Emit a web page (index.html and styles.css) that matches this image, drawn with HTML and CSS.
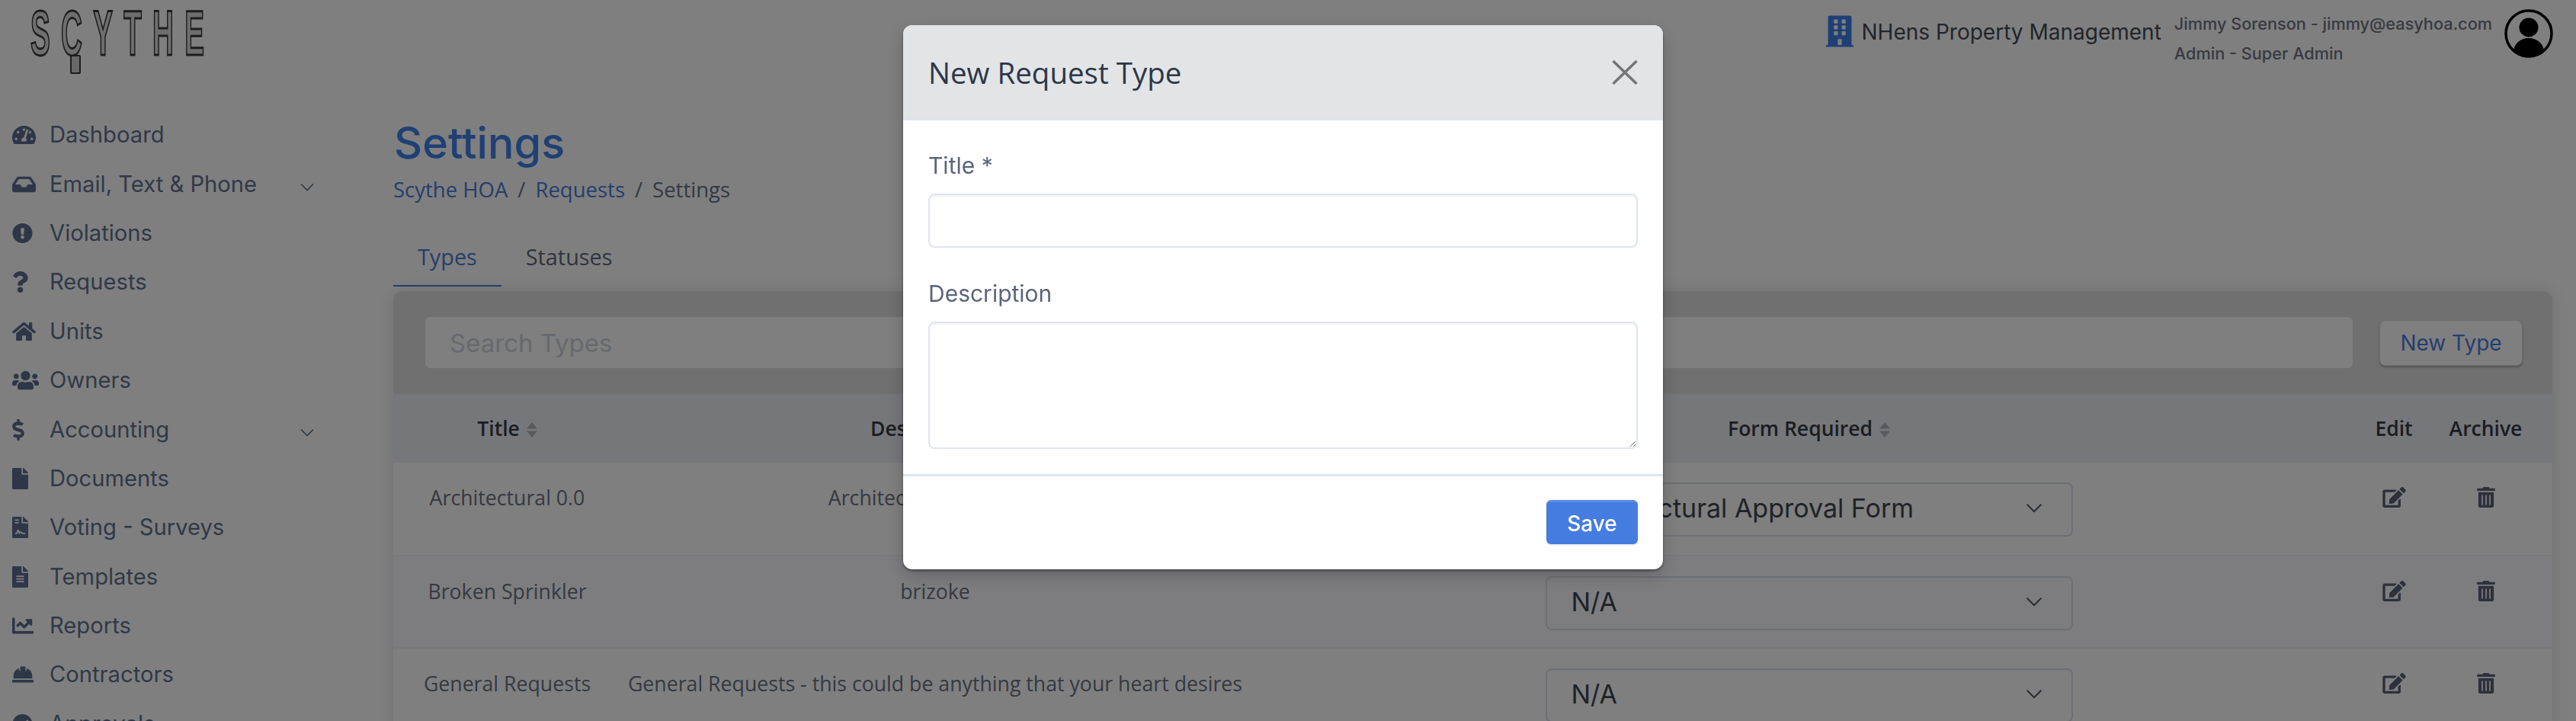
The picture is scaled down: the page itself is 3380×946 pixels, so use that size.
FILE: index.html
```html
<!DOCTYPE html>
<html lang="en">
<head>
<meta charset="utf-8">
<title>Settings</title>
<link rel="stylesheet" href="styles.css">
</head>
<body>
<svg class="defs" aria-hidden="true">
  <symbol id="i-dash" viewBox="0 0 576 512"><path d="M288 32C128.94 32 0 160.94 0 320c0 52.8 14.25 102.26 39.06 144.8 5.61 9.62 16.3 15.2 27.44 15.2h443c11.14 0 21.83-5.58 27.44-15.2C561.75 422.26 576 372.8 576 320c0-159.06-128.94-288-288-288zm0 64c14.71 0 26.58 10.13 30.32 23.65-1.11 2.26-2.64 4.23-3.45 6.67l-9.22 27.67c-5.13 3.49-10.97 6.01-17.64 6.01-17.67 0-32-14.33-32-32S270.33 96 288 96zM96 384c-17.67 0-32-14.33-32-32s14.33-32 32-32 32 14.33 32 32-14.33 32-32 32zm48-160c-17.67 0-32-14.33-32-32s14.33-32 32-32 32 14.33 32 32-14.33 32-32 32zm246.77-72.41l-61.33 184C343.13 347.33 352 364.54 352 384c0 11.72-3.38 22.55-8.88 32H232.88c-5.5-9.45-8.88-20.28-8.88-32 0-33.94 26.5-61.43 59.9-63.59l61.34-184.01c4.17-12.56 17.73-19.45 30.36-15.17 12.57 4.19 19.35 17.79 15.17 30.36zm14.66 57.2l15.52-46.55c3.47-1.29 7.13-2.23 11.05-2.23 17.67 0 32 14.33 32 32s-14.33 32-32 32c-11.38-.01-20.89-6.28-26.57-15.22zM480 384c-17.67 0-32-14.33-32-32s14.33-32 32-32 32 14.33 32 32-14.33 32-32 32z"/></symbol>
  <symbol id="i-inbox" viewBox="0 0 576 512"><path d="M567.938 243.908L462.25 85.374A48.003 48.003 0 0 0 422.311 64H153.689a48 48 0 0 0-39.938 21.374L8.062 243.908A47.994 47.994 0 0 0 0 270.533V400c0 26.51 21.49 48 48 48h480c26.51 0 48-21.49 48-48V270.533a47.994 47.994 0 0 0-8.062-26.625zM162.252 128h251.497l85.333 128H376l-32 64H232l-32-64H76.918l85.334-128z"/></symbol>
  <symbol id="i-excl" viewBox="0 0 512 512"><path d="M504 256c0 136.997-111.043 248-248 248S8 392.997 8 256C8 119.083 119.043 8 256 8s248 111.083 248 248zm-248 50c-25.405 0-46 20.595-46 46s20.595 46 46 46 46-20.595 46-46-20.595-46-46-46zm-43.673-165.346l7.418 136c.347 6.364 5.609 11.346 11.982 11.346h48.546c6.373 0 11.635-4.982 11.982-11.346l7.418-136c.375-6.874-5.098-12.654-11.982-12.654h-63.383c-6.884 0-12.356 5.78-11.981 12.654z"/></symbol>
  <symbol id="i-quest" viewBox="0 0 384 512"><path d="M202.021 0C122.202 0 70.503 32.703 29.914 91.026c-7.363 10.58-5.093 25.086 5.178 32.874l43.138 32.709c10.373 7.865 25.132 6.026 33.253-4.148 25.049-31.381 43.63-49.449 82.757-49.449 30.764 0 68.816 19.799 68.816 49.631 0 22.552-18.617 34.134-48.993 51.164-35.423 19.86-82.299 44.576-82.299 106.405V320c0 13.255 10.745 24 24 24h72.471c13.255 0 24-10.745 24-24v-5.773c0-42.86 125.268-44.645 125.268-160.627C377.504 66.256 286.902 0 202.021 0zM192 373.459c-38.196 0-69.271 31.075-69.271 69.271 0 38.195 31.075 69.27 69.271 69.27s69.271-31.075 69.271-69.271-31.075-69.27-69.271-69.27z"/></symbol>
  <symbol id="i-home" viewBox="0 0 576 512"><path d="M280.37 148.26L96 300.11V464a16 16 0 0 0 16 16l112.06-.29a16 16 0 0 0 15.92-16V368a16 16 0 0 1 16-16h64a16 16 0 0 1 16 16v95.64a16 16 0 0 0 16 16.05L464 480a16 16 0 0 0 16-16V300L295.67 148.26a12.19 12.19 0 0 0-15.3 0zM571.6 251.47L488 182.56V44.05a12 12 0 0 0-12-12h-56a12 12 0 0 0-12 12v72.61L318.47 43a48 48 0 0 0-61 0L4.34 251.47a12 12 0 0 0-1.6 16.9l25.5 31A12 12 0 0 0 45.15 301l235.22-193.74a12.19 12.19 0 0 1 15.3 0L530.9 301a12 12 0 0 0 16.9-1.6l25.5-31a12 12 0 0 0-1.7-16.93z"/></symbol>
  <symbol id="i-users" viewBox="0 0 640 512"><path d="M96 224c35.3 0 64-28.7 64-64s-28.7-64-64-64-64 28.7-64 64 28.7 64 64 64zm448 0c35.3 0 64-28.7 64-64s-28.7-64-64-64-64 28.7-64 64 28.7 64 64 64zm32 32h-64c-17.6 0-33.5 7.1-45.1 18.6 40.3 22.1 68.9 62 75.1 109.4h66c17.7 0 32-14.3 32-32v-32c0-35.3-28.7-64-64-64zm-256 0c61.9 0 112-50.1 112-112S381.9 32 320 32 208 82.1 208 144s50.1 112 112 112zm76.8 32h-8.3c-20.8 10-43.9 16-68.5 16s-47.6-6-68.5-16h-8.3C179.6 288 128 339.6 128 403.2V432c0 26.5 21.5 48 48 48h288c26.5 0 48-21.5 48-48v-28.8c0-63.6-51.6-115.2-115.2-115.2zm-223.7-13.4C161.5 263.1 145.6 256 128 256H64c-35.3 0-64 28.7-64 64v32c0 17.7 14.3 32 32 32h65.9c6.3-47.4 34.9-87.3 75.2-109.4z"/></symbol>
  <symbol id="i-dollar" viewBox="0 0 288 512"><path d="M209.2 233.4l-108-31.6C88.7 198.2 80 186.5 80 173.5c0-16.3 13.2-29.5 29.5-29.5h66.3c12.2 0 24.2 3.7 34.2 10.5 6.1 4.1 14.3 3.1 19.5-2l34.8-34c7.1-6.9 6.1-18.4-1.8-24.5C238 74.8 207.4 64.1 176 64V16c0-8.8-7.2-16-16-16h-32c-8.8 0-16 7.2-16 16v48h-2.5C45.8 64-5.4 118.7.5 183.6c4.2 46.1 39.4 83.6 83.8 96.6l102.5 30c12.5 3.7 21.2 15.3 21.2 28.3 0 16.3-13.2 29.5-29.5 29.5h-66.3C100 368 88 364.3 78 357.5c-6.1-4.1-14.3-3.1-19.5 2l-34.8 34c-7.1 6.9-6.1 18.4 1.8 24.5 24.5 19.2 55.1 29.9 86.5 30v48c0 8.8 7.2 16 16 16h32c8.8 0 16-7.2 16-16v-48.2c46.6-.9 90.3-28.6 105.7-72.7 21.5-61.6-14.6-124.8-72.5-141.7z"/></symbol>
  <symbol id="i-file" viewBox="0 0 384 512"><path d="M224 136V0H24C10.7 0 0 10.7 0 24v464c0 13.3 10.7 24 24 24h336c13.3 0 24-10.7 24-24V160H248c-13.2 0-24-10.8-24-24zm160-14.1v6.1H256V0h6.1c6.4 0 12.5 2.5 17 7l97.9 98c4.5 4.5 7 10.6 7 16.9z"/></symbol>
  <symbol id="i-contract" viewBox="0 0 384 512"><path d="M224 136V0H24C10.7 0 0 10.7 0 24v464c0 13.3 10.7 24 24 24h336c13.3 0 24-10.7 24-24V160H248c-13.2 0-24-10.8-24-24zM64 72c0-4.42 3.58-8 8-8h80c4.42 0 8 3.58 8 8v16c0 4.42-3.58 8-8 8H72c-4.42 0-8-3.58-8-8V72zm0 64c0-4.42 3.58-8 8-8h80c4.42 0 8 3.58 8 8v16c0 4.42-3.58 8-8 8H72c-4.42 0-8-3.58-8-8v-16zm192.81 248H304c8.84 0 16 7.16 16 16s-7.16 16-16 16h-47.19c-16.45 0-31.27-9.14-38.64-23.86-2.95-5.92-8.09-6.52-10.17-6.52s-7.22.59-10.02 6.19l-7.67 15.34a15.986 15.986 0 0 1-14.31 8.84c-.38 0-.75-.02-1.14-.05-6.45-.45-12-4.75-14.03-10.89L144 354.59l-10.61 31.88c-5.89 17.66-22.38 29.53-41 29.53H80c-8.84 0-16-7.16-16-16s7.16-16 16-16h12.39c4.83 0 9.11-3.08 10.64-7.66l18.19-54.64c3.3-9.81 12.44-16.41 22.78-16.41s19.48 6.59 22.77 16.41l13.88 41.64c19.77-16.19 54.05-9.7 66 14.16 2.02 4.06 5.96 6.5 10.16 6.5zM377 105L279.1 7c-4.5-4.5-10.6-7-17-7H256v128h128v-6.1c0-6.3-2.5-12.4-7-16.9z"/></symbol>
  <symbol id="i-filealt" viewBox="0 0 384 512"><path d="M224 136V0H24C10.7 0 0 10.7 0 24v464c0 13.3 10.7 24 24 24h336c13.3 0 24-10.7 24-24V160H248c-13.2 0-24-10.8-24-24zm64 236c0 6.6-5.4 12-12 12H108c-6.6 0-12-5.4-12-12v-8c0-6.6 5.4-12 12-12h168c6.6 0 12 5.4 12 12v8zm0-64c0 6.6-5.4 12-12 12H108c-6.6 0-12-5.4-12-12v-8c0-6.6 5.4-12 12-12h168c6.6 0 12 5.4 12 12v8zm0-72v8c0 6.6-5.4 12-12 12H108c-6.6 0-12-5.4-12-12v-8c0-6.6 5.4-12 12-12h168c6.6 0 12 5.4 12 12zm96-114.1v6.1H256V0h6.1c6.4 0 12.5 2.5 17 7l97.9 98c4.5 4.5 7 10.6 7 16.9z"/></symbol>
  <symbol id="i-chart" viewBox="0 0 512 512"><path d="M496 384H64V80c0-8.84-7.16-16-16-16H16C7.16 64 0 71.16 0 80v336c0 17.67 14.33 32 32 32h464c8.84 0 16-7.16 16-16v-32c0-8.84-7.16-16-16-16zM464 96H345.94c-21.38 0-32.09 25.85-16.97 40.97l32.4 32.4L288 242.75l-73.37-73.37c-12.5-12.5-32.76-12.5-45.25 0l-68.69 68.69c-6.25 6.25-6.25 16.38 0 22.63l22.62 22.62c6.25 6.25 16.38 6.25 22.63 0L192 237.25l73.37 73.37c12.5 12.5 32.76 12.5 45.25 0l96-96 32.4 32.4c15.12 15.12 40.97 4.41 40.97-16.97V112c.01-8.84-7.15-16-15.99-16z"/></symbol>
  <symbol id="i-hat" viewBox="0 0 512 512"><path d="M480 288c0-80.25-49.28-148.92-119.19-177.62L320 192V80a16 16 0 0 0-16-16h-96a16 16 0 0 0-16 16v112l-40.81-81.62C81.28 139.08 32 207.75 32 288v64h448zm16 96H16a16 16 0 0 0-16 16v32a16 16 0 0 0 16 16h480a16 16 0 0 0 16-16v-32a16 16 0 0 0-16-16z"/></symbol>
  <symbol id="i-check" viewBox="0 0 512 512"><path d="M504 256c0 137-111 248-248 248S8 393 8 256 119 8 256 8s248 111 248 248zM227 387l184-184c6-6 6-16 0-22l-23-23c-6-6-16-6-22 0L216 308l-70-70c-6-6-16-6-22 0l-23 23c-6 6-6 16 0 22l104 104c6 6 16 6 22 0z"/></symbol>
  <symbol id="i-chev" viewBox="0 0 18 12"><path d="M1 1.500l8 8 8-8" fill="none" stroke="currentColor" stroke-width="1.600"/></symbol>
  <symbol id="i-sort" viewBox="0 0 14 20"><path d="M7 0l7 8.500H0zM7 20l7-8.500H0z"/></symbol>
  <symbol id="i-edit" viewBox="0 0 576 512"><path d="M402.6 83.2l90.2 90.2c3.8 3.8 3.8 10 0 13.8L274.4 405.6l-92.8 10.3c-12.4 1.4-22.9-9.1-21.5-21.5l10.3-92.8L388.8 83.2c3.8-3.8 10-3.8 13.8 0zm162-22.9l-48.8-48.8c-15.2-15.2-39.9-15.2-55.2 0l-35.4 35.4c-3.8 3.8-3.8 10 0 13.8l90.2 90.2c3.8 3.8 10 3.8 13.8 0l35.4-35.4c15.2-15.3 15.2-40 0-55.2zM384 346.2V448H64V128h229.8c3.2 0 6.2-1.3 8.5-3.5l40-40c7.6-7.6 2.2-20.5-8.5-20.5H48C21.5 64 0 85.5 0 112v352c0 26.5 21.5 48 48 48h352c26.5 0 48-21.5 48-48V306.2c0-10.7-12.9-16-20.5-8.5l-40 40c-2.2 2.3-3.5 5.3-3.5 8.5z"/></symbol>
  <symbol id="i-trash" viewBox="0 0 448 512"><path d="M32 464a48 48 0 0 0 48 48h288a48 48 0 0 0 48-48V128H32zm272-256a16 16 0 0 1 32 0v224a16 16 0 0 1-32 0zm-96 0a16 16 0 0 1 32 0v224a16 16 0 0 1-32 0zm-96 0a16 16 0 0 1 32 0v224a16 16 0 0 1-32 0zM432 32H312l-9.4-18.7A24 24 0 0 0 281.1 0H166.8a23.72 23.72 0 0 0-21.4 13.3L136 32H16A16 16 0 0 0 0 48v32a16 16 0 0 0 16 16h416a16 16 0 0 0 16-16V48a16 16 0 0 0-16-16z"/></symbol>
</svg>

<div class="app">
  <aside class="sidebar">
    <div class="logo"><span class="logo-text">SCYTHE</span><span class="logo-tail"></span></div>
    <nav class="nav">
      <a class="nav-item"><span class="nav-icon"><svg class="ic w31"><use href="#i-dash"/></svg></span>Dashboard</a>
      <a class="nav-item"><span class="nav-icon"><svg class="ic w31"><use href="#i-inbox"/></svg></span>Email, Text &amp; Phone<svg class="nav-chev"><use href="#i-chev"/></svg></a>
      <a class="nav-item"><span class="nav-icon"><svg class="ic w27"><use href="#i-excl"/></svg></span>Violations</a>
      <a class="nav-item"><span class="nav-icon"><svg class="ic w21"><use href="#i-quest"/></svg></span>Requests</a>
      <a class="nav-item"><span class="nav-icon"><svg class="ic w31"><use href="#i-home"/></svg></span>Units</a>
      <a class="nav-item"><span class="nav-icon"><svg class="ic w35"><use href="#i-users"/></svg></span>Owners</a>
      <a class="nav-item"><span class="nav-icon"><svg class="ic w16"><use href="#i-dollar"/></svg></span>Accounting<svg class="nav-chev"><use href="#i-chev"/></svg></a>
      <a class="nav-item"><span class="nav-icon"><svg class="ic w21"><use href="#i-file"/></svg></span>Documents</a>
      <a class="nav-item"><span class="nav-icon"><svg class="ic w21"><use href="#i-contract"/></svg></span>Voting - Surveys</a>
      <a class="nav-item"><span class="nav-icon"><svg class="ic w21"><use href="#i-filealt"/></svg></span>Templates</a>
      <a class="nav-item"><span class="nav-icon"><svg class="ic w28"><use href="#i-chart"/></svg></span>Reports</a>
      <a class="nav-item"><span class="nav-icon"><svg class="ic w28"><use href="#i-hat"/></svg></span>Contractors</a>
      <a class="nav-item"><span class="nav-icon"><svg class="ic w27"><use href="#i-check"/></svg></span>Approvals</a>
    </nav>
  </aside>

  <main class="main">
    <header class="topbar">
      <svg class="building" viewBox="0 0 448 512"><path d="M436 480h-20V24c0-13.255-10.745-24-24-24H56C42.745 0 32 10.745 32 24v456H12c-6.627 0-12 5.373-12 12v20h448v-20c0-6.627-5.373-12-12-12zM128 76c0-6.627 5.373-12 12-12h40c6.627 0 12 5.373 12 12v40c0 6.627-5.373 12-12 12h-40c-6.627 0-12-5.373-12-12V76zm0 96c0-6.627 5.373-12 12-12h40c6.627 0 12 5.373 12 12v40c0 6.627-5.373 12-12 12h-40c-6.627 0-12-5.373-12-12v-40zm52 148h-40c-6.627 0-12-5.373-12-12v-40c0-6.627 5.373-12 12-12h40c6.627 0 12 5.373 12 12v40c0 6.627-5.373 12-12 12zm76 160h-64v-84c0-6.627 5.373-12 12-12h40c6.627 0 12 5.373 12 12v84zm64-172c0 6.627-5.373 12-12 12h-40c-6.627 0-12-5.373-12-12v-40c0-6.627 5.373-12 12-12h40c6.627 0 12 5.373 12 12v40zm0-96c0 6.627-5.373 12-12 12h-40c-6.627 0-12-5.373-12-12v-40c0-6.627 5.373-12 12-12h40c6.627 0 12 5.373 12 12v40zm0-96c0 6.627-5.373 12-12 12h-40c-6.627 0-12-5.373-12-12V76c0-6.627 5.373-12 12-12h40c6.627 0 12 5.373 12 12v40z"/></svg>
      <span class="company">NHens Property Management</span>
      <div class="user">
        <div class="user-line">Jimmy Sorenson - jimmy@easyhoa.com</div>
        <div class="user-line">Admin - Super Admin</div>
      </div>
      <svg class="avatar" viewBox="0 0 64 64"><defs><clipPath id="ring"><circle cx="32" cy="32" r="29"/></clipPath></defs><circle cx="32" cy="32" r="30" fill="none" stroke="#000" stroke-width="3.500"/><circle cx="32" cy="24" r="12.500"/><ellipse cx="32" cy="56" rx="20" ry="18" clip-path="url(#ring)"/></svg>
    </header>

    <h1 class="page-title">Settings</h1>
    <div class="crumbs"><a class="crumb-link">Scythe HOA</a><span class="crumb-sep">/</span><a class="crumb-link">Requests</a><span class="crumb-sep">/</span><span>Settings</span></div>

    <div class="tabs"><a class="tab tab-active">Types</a><a class="tab">Statuses</a></div>

    <section class="card">
      <div class="card-head">
        <input class="search" placeholder="Search Types">
        <button class="btn-outline">New Type</button>
      </div>
      <table class="grid">
        <colgroup><col class="c-title"><col class="c-desc"><col class="c-form"><col class="c-edit"><col class="c-arch"></colgroup>
        <thead>
          <tr>
            <th>Title <svg class="sort"><use href="#i-sort"/></svg></th>
            <th>Description <svg class="sort"><use href="#i-sort"/></svg></th>
            <th>Form Required <svg class="sort"><use href="#i-sort"/></svg></th>
            <th>Edit</th>
            <th>Archive</th>
          </tr>
        </thead>
        <tbody>
          <tr>
            <td>Architectural 0.0</td>
            <td>Architectural Requests</td>
            <td><div class="select"><span>Architectural Approval Form</span><svg class="select-chev"><use href="#i-chev"/></svg></div></td>
            <td><svg class="act act-edit"><use href="#i-edit"/></svg></td>
            <td><svg class="act act-trash"><use href="#i-trash"/></svg></td>
          </tr>
          <tr class="alt">
            <td>Broken Sprinkler</td>
            <td>brizoke</td>
            <td><div class="select"><span>N/A</span><svg class="select-chev"><use href="#i-chev"/></svg></div></td>
            <td><svg class="act act-edit"><use href="#i-edit"/></svg></td>
            <td><svg class="act act-trash"><use href="#i-trash"/></svg></td>
          </tr>
          <tr>
            <td>General Requests</td>
            <td>General Requests - this could be anything that your heart desires</td>
            <td><div class="select"><span>N/A</span><svg class="select-chev"><use href="#i-chev"/></svg></div></td>
            <td><svg class="act act-edit"><use href="#i-edit"/></svg></td>
            <td><svg class="act act-trash"><use href="#i-trash"/></svg></td>
          </tr>
        </tbody>
      </table>
    </section>
  </main>
</div>

<div class="backdrop">
  <div class="modal">
    <div class="modal-head">
      <h2 class="modal-title">New Request Type</h2>
      <svg class="modal-close" viewBox="0 0 34 32"><path d="M1.500 1l31 30M32.500 1l-31 30" fill="none" stroke="#757575" stroke-width="3.500"/></svg>
    </div>
    <div class="modal-body">
      <label class="field-label">Title *</label>
      <input class="field-input">
      <label class="field-label field-gap">Description</label>
      <textarea class="field-area"></textarea>
    </div>
    <div class="modal-foot"><button class="btn-save">Save</button></div>
  </div>
</div>
</body>
</html>
```

FILE: styles.css
```css
* { box-sizing: border-box; }
html, body { margin: 0; height: 946px; overflow: hidden; background: #fff; }
body { font-family: "Open Sans", "Liberation Sans", sans-serif; color: #3e4652; }
.defs { width: 0; height: 0; position: absolute; }
a { color: inherit; text-decoration: none; }

.app { display: grid; grid-template-columns: 516px 1fr; height: 946px; overflow: hidden; }

/* sidebar */
.sidebar { padding-left: 16px; }
.logo { height: 145px; padding: 5px 0 0 24px; position: relative; }
.logo-text {
  display: block; width: 560px; height: 76px;
  font: 700 84px/76px "Liberation Sans", sans-serif;
  letter-spacing: 31px;
  color: #dcdcdc;
  -webkit-text-stroke: 3px #3a3a3a;
  transform: scaleX(.46); transform-origin: left top;
}
.logo-tail { position: absolute; left: 76px; top: 72px; width: 14px; height: 25px; background: #d0d0d0; border: 2px solid #3a3a3a; border-radius: 2px; }
.nav { display: flex; flex-direction: column; }
.nav-item {
  display: flex; align-items: center; width: 396px; height: 64.400px; flex: none;
  font: 400 29.200px/40px Inter, sans-serif; color: #5f7290;
}
.nav-icon { width: 49px; flex: none; display: flex; align-items: center; }
.ic { height: 28px; fill: #5c6e90; display: block; }
.w31 { width: 31px; } .w27 { width: 27px; } .w21 { width: 21px; } .w35 { width: 35px; } .w16 { width: 16px; } .w28 { width: 28px; }
.nav-chev { margin-left: auto; margin-top: 8px; width: 18px; height: 12px; color: #5c6e90; }

/* main */
.main { padding-right: 31px; min-width: 0; }
.topbar { height: 152px; display: flex; align-items: flex-start; justify-content: flex-end; margin-right: -1px; padding-top: 12px; }
.building { width: 36px; height: 42px; margin-top: 8px; fill: #3e80e8; flex: none; }
.company { font: 400 28px/44px Inter, sans-serif; color: #424a58; margin: 8px 17px 0 11px; white-space: nowrap; }
.user { margin-right: 16px; }
.user-line { font: 500 21.700px/39px Inter, sans-serif; color: #6e7484; white-space: nowrap; }
.avatar { width: 64px; height: 64px; flex: none; }

.page-title { margin: 0 0 7px 1px; font: 500 57.500px/70px Inter, sans-serif; color: #3e80e8; }
.crumbs { display: flex; font: 400 27.500px/40px "Open Sans", sans-serif; color: #66708a; }
.crumb-link { color: #4a7cd8; }
.crumb-sep { margin: 0 13px; }

.tabs { display: flex; margin-top: 31px; }
.tab { padding: 17px 32px 15px; height: 76px; font: 400 28.800px/40px "Open Sans", sans-serif; color: #5f6a80; }
.tab-active { color: #4a7cd8; border-bottom: 2px solid #3e7ce8; }

.card { margin-top: 6px; border-radius: 12px 12px 0 0; box-shadow: 0 0 24px rgba(0,0,0,.12); overflow: hidden; }
.card-head { display: flex; align-items: center; gap: 35px; height: 135px; padding: 0 39px 0 42px; background: #e0e0e0; }
.search { flex: 1; min-width: 0; height: 67px; padding: 0 32px; border: 0; border-radius: 6px; background: #fff; font: 400 33px Inter, sans-serif; color: #2d3748; }
.search::placeholder { color: #cdd2dc; opacity: 1; }
.btn-outline { width: 188px; height: 60px; background: #fff; border: 1px solid #d8dce6; border-radius: 8px; box-shadow: 0 2px 3px rgba(0,0,0,.25); font: 400 28px Inter, sans-serif; color: #4a7ce0; }

.grid { width: 100%; table-layout: fixed; border-collapse: collapse; background: #fff; }
.c-title { width: 299px; } .c-desc { width: 824px; } .c-form { width: 1469px; } .c-edit { width: 66px; } .c-arch { width: 175px; }
.grid th { height: 90px; padding: 0; background: #edeef4; font: 600 26.500px/40px "Open Sans", sans-serif; color: #353a44; white-space: nowrap; }
.sort { width: 14px; height: 20px; fill: #b0b4c0; margin-left: 2px; vertical-align: -2px; }
.grid td { height: 121.700px; padding: 26px 0 0; text-align: center; vertical-align: top; font: 400 26.700px/40px "Open Sans", sans-serif; color: #6a7284; border-bottom: 2px solid #f2f3f6; white-space: nowrap; }
.alt { background: #fafbff; }
.select {
  width: 692px; height: 71px; margin: 0 auto; padding: 0 38px 3px 32px;
  display: flex; align-items: center; justify-content: space-between;
  border: 2px solid #d9deea; border-radius: 8px;
  font: 400 34px/40px Inter, sans-serif; color: #3e4450;
}
.select-chev { width: 22px; height: 14px; color: #4a5160; }
.act { display: block; margin: 6px auto 0; height: 27px; fill: #586278; }
.act-edit { width: 31px; }
.act-trash { width: 24px; }

/* modal */
.backdrop { position: fixed; inset: 0; background: rgba(0,0,0,.5); padding: 33px 0 0 1185px; }
.modal { width: 997px; height: 714px; background: #fff; border-radius: 12px; overflow: hidden; box-shadow: 0 2px 3px rgba(0,0,0,.4), 0 8px 24px rgba(0,0,0,.2); }
.modal-head { height: 125px; display: flex; align-items: center; justify-content: space-between; padding: 0 33px; background: #e2e4e6; border-bottom: 2px solid #dde5f0; }
.modal-title { margin: 0; font: 400 38.500px/46px "Open Sans", sans-serif; color: #2d3748; }
.modal-close { width: 34px; height: 32px; }
.modal-body { padding: 39px 33px 33px; display: flex; flex-direction: column; }
.field-label { font: 400 30px/40px Inter, sans-serif; color: #5a6579; margin-bottom: 17px; }
.field-gap { margin-top: 40px; }
.field-input { height: 71px; border: 2px solid #dfe4f2; border-radius: 8px; background: #fff; box-shadow: inset 0 2px 3px rgba(100,120,180,.08); }
.field-area { height: 167px; border: 2px solid #dfe4f2; border-radius: 8px; background: #fff; box-shadow: inset 0 2px 3px rgba(100,120,180,.08); }
.modal-foot { display: flex; justify-content: flex-end; padding: 31px 33px 0; border-top: 3px solid #dfe6f0; }
.btn-save { width: 120px; height: 58px; border: 0; border-top: 3px solid #5e8ce6; border-radius: 6px; background: #457ce0; box-shadow: 0 2px 2px rgba(0,0,0,.08); color: #fff; font: 500 28px Inter, sans-serif; }
```
